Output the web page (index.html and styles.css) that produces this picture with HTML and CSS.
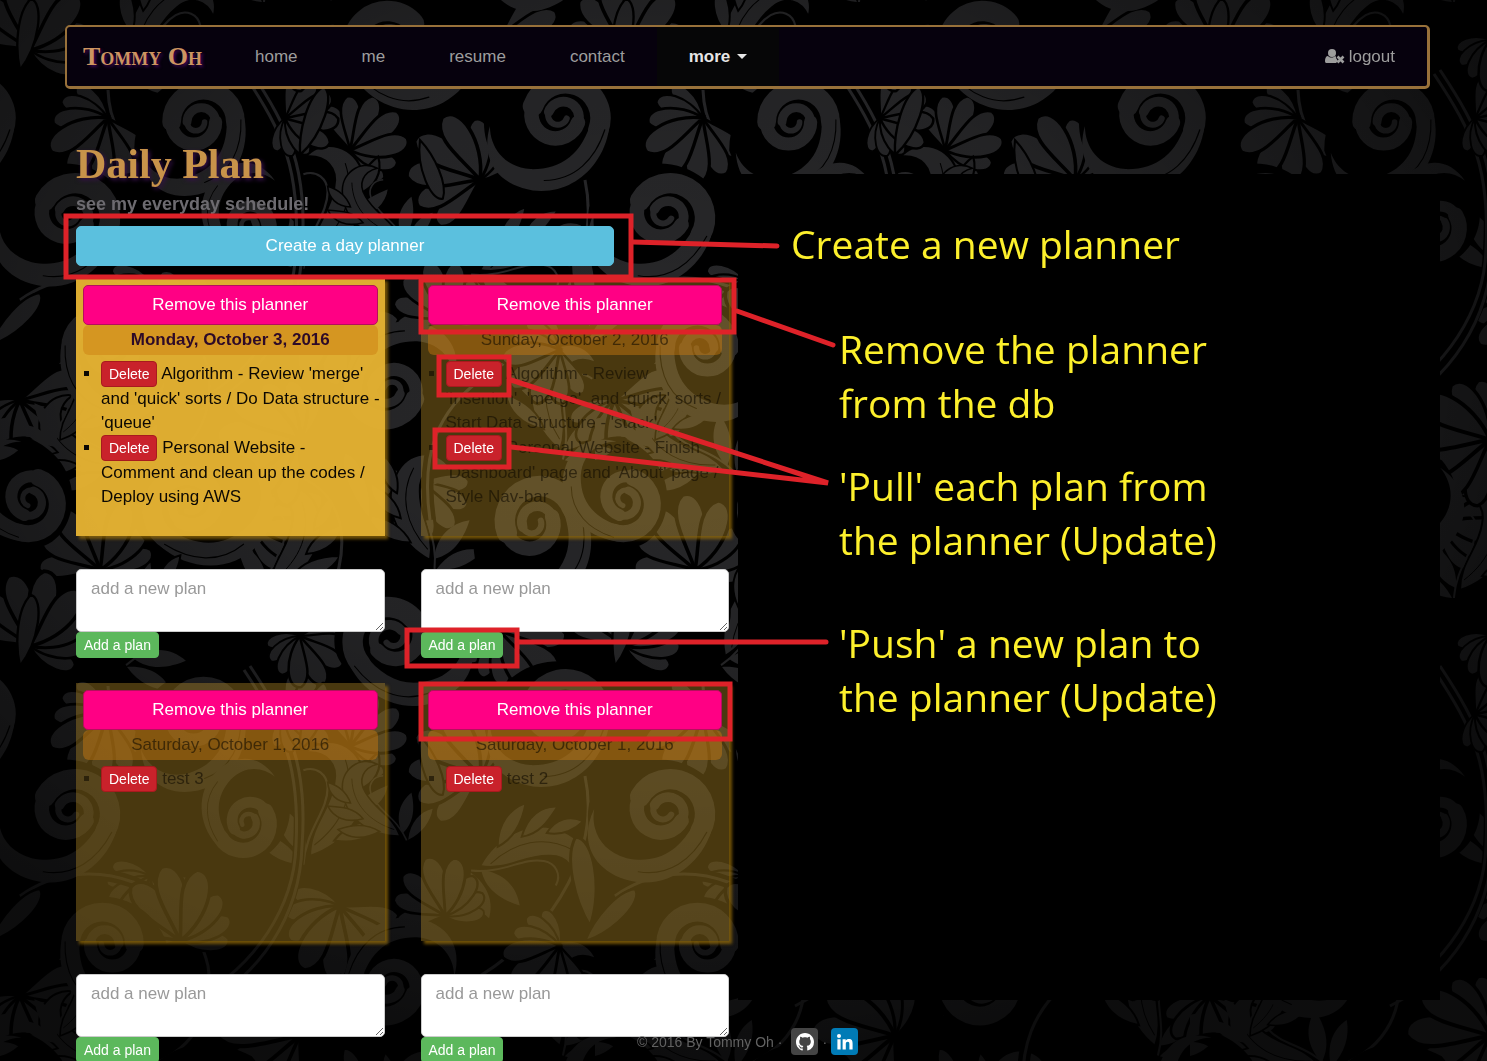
FILE: index.html
```html
<!DOCTYPE html>
<html lang="en">
<head>
<meta charset="utf-8">
<meta name="viewport" content="width=device-width, initial-scale=1">
<title>Daily Plan - Tommy Oh</title>
<link rel="stylesheet" href="styles.css">
</head>
<body>
<svg class="backdrop" aria-hidden="true">
  <defs>
    <g id="scroll" fill="none" stroke="#28282a" stroke-linecap="round">
      <path fill="#000" stroke="none" d="M30-24C32 24 20 46-8 54C-34 60-50 48-58 26C-56-60 50-60 46-4Z"/>
      <path fill="#28282a" stroke="none" d="M26-6C28 24 16 42-8 50C-30 56-46 44-52 28C-50 56-30 72 0 66C34 58 48 24 42-4Z"/>
      <path stroke-width="5" d="M6 0A8 8 0 0 1-10 0"/>
      <path stroke-width="8" d="M-10 0A13 13 0 0 1 16 0"/>
      <path stroke-width="12" d="M16 0A20 20 0 0 1-24 0"/>
      <path stroke-width="17" d="M-24 0A29 29 0 0 1 34 0"/>
      <path stroke="#000" stroke-width="1" d="M39-2C40 24 30 46 6 55"/>
    </g>
    <path id="petal" fill="#28282a" stroke="#000" stroke-width="3" d="M0 0C-6-20-24-46-10-60C8-66 16-28 0 0Z"/>
    <g id="drop">
      <path fill="#28282a" stroke="#000" stroke-width="3" d="M0 0C-12-28-16-72-2-90C16-88 18-34 0 0Z"/>
    </g>
    <g id="fan">
      <use href="#petal" transform="rotate(-100)"/>
      <use href="#petal" transform="rotate(82) scale(.8)"/>
      <use href="#petal" transform="rotate(-74) scale(1.1)"/>
      <use href="#petal" transform="rotate(58) scale(.9)"/>
      <use href="#petal" transform="rotate(-48) scale(1.200)"/>
      <use href="#petal" transform="rotate(34)"/>
      <use href="#petal" transform="rotate(-20) scale(1.250)"/>
      <use href="#petal" transform="rotate(8) scale(1.200)"/>
    </g>
    <g id="plume">
      <path fill="#28282a" stroke="#000" stroke-width="2" d="M0 0C-30-10-58-40-48-78C-42-104-12-112 4-94C-14-96-26-84-22-66C-18-40 0-28 0 0Z"/>
      <path fill="#28282a" stroke="#000" stroke-width="2" d="M-44-60C-60-66-66-80-62-94C-54-88-44-78-44-60ZM-36-36C-58-38-70-50-72-66C-58-60-42-54-36-36ZM-22-14C-46-10-62-20-70-34C-52-34-34-30-22-14Z"/>
      <path fill="none" stroke="#28282a" stroke-width="2" d="M6 8C4-24-16-40-16-62C-16-74-6-82 6-78"/>
      <path fill="#28282a" d="M4-2C2-24 14-40 32-46C30-30 24-10 4-2ZM8 8C18-12 34-20 50-18C42-4 28 6 8 8Z"/>
      <path fill="none" stroke="#000" d="M-4-10C-30-30-42-58-32-88"/>
    </g>
    <g id="tile">
      <use href="#fan" transform="translate(30 50) rotate(40)"/>
      <use href="#fan" transform="translate(350 150) rotate(80) scale(.8)"/>
      <use href="#fan" transform="translate(20 400) rotate(170)"/>
      <use href="#fan" transform="translate(250 520) rotate(100)"/>
      <use href="#fan" transform="translate(420 480) rotate(200) scale(.8)"/>
      <use href="#fan" transform="translate(340 310) rotate(-150)"/>
      <use href="#fan" transform="translate(150 280) rotate(-150) scale(.8)"/>
      <use href="#plume" transform="translate(130 60) rotate(60)"/>
      <use href="#plume" transform="translate(480 270) rotate(100)"/>
      <use href="#plume" transform="translate(130 470) rotate(-40)"/>
      <use href="#plume" transform="translate(310 260) scale(-1.1 1.1)"/>
      <use href="#plume" transform="translate(400 240) rotate(-20) scale(.8)"/>
      <use href="#plume" transform="translate(560 450) rotate(20)"/>
      <use href="#plume" transform="translate(60 440) scale(-.8 .8)"/>
      <use href="#plume" transform="translate(430 560) rotate(10)"/>
      <use href="#plume" transform="translate(270 590) scale(-1 1)"/>
      <g fill="none" stroke="#000" stroke-width="12">
        <path d="M247 72C287 132 304 170 299 250C297 315 258 375 198 406"/>
        <path d="M585 180C600 250 560 330 480 380C440 410 420 450 430 520"/>
        <path d="M20 300C90 250 190 290 208 370C214 410 200 450 150 470"/>
      </g>
      <g fill="none" stroke="#28282a" stroke-width="3">
        <path d="M250 70C290 130 308 170 302 250C300 320 260 380 200 410"/>
        <path d="M244 74C284 134 300 170 296 250C294 310 256 370 196 402"/>
        <path d="M108 90C110 150 160 190 260 186"/>
        <path d="M585 180C600 250 560 330 480 380C440 410 420 450 430 520"/>
        <path d="M20 300C90 250 190 290 208 370C214 410 200 450 150 470"/>
        <path d="M350 420C360 360 400 320 470 300"/>
        <path d="M330 596C360 520 330 470 260 470"/>
      </g>
      <use href="#fan" transform="translate(108 118) rotate(-120) scale(.9)"/>
      <use href="#fan" transform="translate(285 118) rotate(120) scale(.7)"/>
      <use href="#fan" transform="translate(480 180) rotate(-30)"/>
      <use href="#fan" transform="translate(180 345) rotate(15)"/>
      <use href="#fan" transform="translate(300 440) rotate(-60) scale(1.1)"/>
      <use href="#fan" transform="translate(445 320) rotate(10) scale(.8)"/>
      <use href="#fan" transform="translate(560 350) rotate(-100) scale(.8)"/>
      <use href="#fan" transform="translate(100 570) rotate(20)"/>
      <use href="#fan" transform="translate(500 35) rotate(150) scale(.9)"/>
      <use href="#fan" transform="translate(300 40) rotate(180) scale(.7)"/>
      <use href="#drop" transform="translate(300 155) rotate(20) scale(.8)"/>
      <use href="#drop" transform="translate(590 330) rotate(-8)"/>
      <use href="#drop" transform="translate(585 345) rotate(45) scale(.8)"/>
      <use href="#drop" transform="translate(370 520) rotate(-20) scale(.8)"/>
      <use href="#drop" transform="translate(20 70) rotate(10) scale(.8)"/>
      <use href="#drop" transform="translate(420 140) rotate(160) scale(.7)"/>
      <use href="#scroll" transform="translate(198 122) scale(1.100)"/>
      <use href="#scroll" transform="translate(560 116) scale(1.200) rotate(20)"/>
      <use href="#scroll" transform="translate(70 215) rotate(30) scale(1.200)"/>
      <use href="#scroll" transform="translate(247 226) rotate(150) scale(.9)"/>
      <use href="#scroll" transform="translate(108 348) scale(-1.100 1.100)"/>
      <use href="#scroll" transform="translate(534 523) rotate(-20) scale(1.200)"/>
      <use href="#scroll" transform="translate(392 42) scale(-1.200 1.200) rotate(40)"/>
      <use href="#scroll" transform="translate(190 505) scale(-1.200 1.200) rotate(60)"/>
      <use href="#scroll" transform="translate(390 390) rotate(200) scale(1.100)"/>
      <use href="#scroll" transform="translate(30 500) rotate(110)"/>
    </g>
    <pattern id="damask" width="595" height="596" patternUnits="userSpaceOnUse">
      <rect width="595" height="596" fill="#000"/>
      <use href="#tile"/>
      <use href="#tile" x="-595"/>
      <use href="#tile" x="595"/>
      <use href="#tile" y="-596"/>
      <use href="#tile" y="596"/>
    </pattern>
    <radialGradient id="shade" cx=".44" cy=".34" r=".66">
      <stop offset="0" stop-color="#000" stop-opacity="0"/>
      <stop offset=".45" stop-color="#000" stop-opacity=".12"/>
      <stop offset="1" stop-color="#000" stop-opacity=".68"/>
    </radialGradient>
  </defs>
  <rect width="100%" height="100%" fill="url(#damask)"/>
  <rect width="100%" height="100%" fill="url(#shade)"/>
</svg>

<div class="page">
  <header class="navbar">
    <a class="brand" href="#">Tommy Oh</a>
    <nav class="nav">
      <a href="#">home</a>
      <a href="#">me</a>
      <a href="#">resume</a>
      <a href="#">contact</a>
      <a class="nav-open" href="#">more <span class="caret"></span></a>
    </nav>
    <a class="logout" href="#">
      <svg width="20" height="15" viewBox="0 0 20 15" aria-hidden="true">
        <circle cx="7" cy="4" r="4" fill="currentColor"/>
        <path fill="currentColor" d="M3 7C1 7 0 9 0 12C0 14 1 14 2 14H11L13 12L11 9C11 8 11 7 10 7C8 9 5 9 3 7Z"/>
        <path d="M12.500 7.500L18.500 13.500M18.500 7.500L12.500 13.500" stroke="currentColor" stroke-width="2.600"/>
      </svg>
      logout</a>
  </header>

  <main class="layout">
    <section class="plans">
      <h1>Daily Plan</h1>
      <p class="lead">see my everyday schedule!</p>
      <button class="btn btn-create" type="button">Create a day planner</button>

      <div class="planners">
        <article class="planner">
          <div class="card card-today">
            <button class="btn btn-remove" type="button">Remove this planner</button>
            <h2>Monday, October 3, 2016</h2>
            <ul>
              <li><button class="btn-small btn-delete" type="button">Delete</button> Algorithm - Review 'merge'<br>and 'quick' sorts / Do Data structure -<br>'queue'</li>
              <li><button class="btn-small btn-delete" type="button">Delete</button> Personal Website -<br>Comment and clean up the codes / Deploy using AWS</li>
            </ul>
          </div>
          <textarea aria-label="New plan for October 3" placeholder="add a new plan"></textarea>
          <button class="btn-small btn-add" type="button">Add a plan</button>
        </article>

        <article class="planner">
          <div class="card">
            <button class="btn btn-remove" type="button">Remove this planner</button>
            <h2>Sunday, October 2, 2016</h2>
            <ul>
              <li><button class="btn-small btn-delete" type="button">Delete</button> Algorithm - Review<br>'Insertion', 'merge', and 'quick' sorts / Start Data Structure - 'stack'</li>
              <li><button class="btn-small btn-delete" type="button">Delete</button> Personal Website - Finish<br>'Dashboard' page and 'About' page / Style Nav-bar</li>
            </ul>
          </div>
          <textarea aria-label="New plan for October 2" placeholder="add a new plan"></textarea>
          <button class="btn-small btn-add" type="button">Add a plan</button>
        </article>

        <article class="planner">
          <div class="card">
            <button class="btn btn-remove" type="button">Remove this planner</button>
            <h2>Saturday, October 1, 2016</h2>
            <ul>
              <li><button class="btn-small btn-delete" type="button">Delete</button> test 3</li>
            </ul>
          </div>
          <textarea aria-label="New plan for October 1, third" placeholder="add a new plan"></textarea>
          <button class="btn-small btn-add" type="button">Add a plan</button>
        </article>

        <article class="planner">
          <div class="card">
            <button class="btn btn-remove" type="button">Remove this planner</button>
            <h2>Saturday, October 1, 2016</h2>
            <ul>
              <li><button class="btn-small btn-delete" type="button">Delete</button> test 2</li>
            </ul>
          </div>
          <textarea aria-label="New plan for October 1, second" placeholder="add a new plan"></textarea>
          <button class="btn-small btn-add" type="button">Add a plan</button>
        </article>
      </div>
    </section>

    <aside class="notes">
      <p class="note-create">Create a new planner</p>
      <p class="note-remove">Remove the planner<br>from the db</p>
      <p class="note-pull">'Pull' each plan from<br>the planner (Update)</p>
      <p class="note-push">'Push' a new plan to<br>the planner (Update)</p>
    </aside>
  </main>

  <svg class="callouts" width="860" height="760" viewBox="0 0 860 760" fill="none" stroke="#de2229" stroke-width="5" aria-hidden="true">
    <rect x="66" y="216" width="565" height="61"/>
    <rect x="421" y="280" width="313" height="52"/>
    <rect x="439" y="357" width="70" height="38"/>
    <rect x="435" y="430" width="74" height="37"/>
    <rect x="407" y="630" width="110" height="36"/>
    <rect x="421" y="684" width="309" height="55"/>
    <path stroke-linecap="round" d="M633 242L777 246M737 311L833 345M511 380L828 483L511 447M519 642L826 642"/>
  </svg>
</div>

<footer class="footer">
  <span>© 2016 By Tommy Oh ·</span>
  <a class="social github" href="#" aria-label="GitHub">
    <svg width="18" height="18" viewBox="0 0 16 16" aria-hidden="true"><path fill="#fff" d="M8 0C3.580 0 0 3.580 0 8c0 3.540 2.290 6.530 5.470 7.590.400.070.550-.170.550-.380 0-.190-.010-.820-.010-1.490-2.010.370-2.530-.490-2.690-.940-.090-.230-.480-.940-.820-1.130-.280-.150-.680-.520-.010-.530.630-.010 1.080.580 1.230.820.720 1.210 1.870.870 2.330.660.070-.520.280-.870.510-1.070-1.780-.200-3.640-.890-3.640-3.950 0-.870.310-1.590.820-2.150-.080-.200-.360-1.020.080-2.120 0 0 .670-.210 2.200.820.640-.180 1.320-.270 2-.270s1.360.090 2 .270c1.530-1.040 2.200-.820 2.200-.820.440 1.100.160 1.920.080 2.120.510.560.820 1.270.820 2.150 0 3.070-1.870 3.750-3.650 3.950.290.250.540.730.540 1.480 0 1.070-.010 1.930-.010 2.200 0 .210.150.460.550.380A8.010 8.010 0 0 0 16 8c0-4.420-3.580-8-8-8z"/></svg>
  </a>
  <span>·</span>
  <a class="social linkedin" href="#" aria-label="LinkedIn">
    <svg width="16" height="16" viewBox="0 0 16 16" aria-hidden="true"><g fill="#fff"><circle cx="2" cy="2" r="2"/><path d="M0.400 5.300H3.600V15.500H0.400ZM5.600 5.300H8.700V6.700C9.300 5.700 10.400 5 11.900 5C15 5 15.600 7 15.600 9.800V15.500H12.400V10.500C12.400 9.200 12.300 7.800 10.700 7.800C9.100 7.800 8.800 9 8.800 10.400V15.500H5.600Z"/></g></svg>
  </a>
</footer>
</body>
</html>
```

FILE: styles.css
```css
* {
  box-sizing: border-box;
}

body {
  margin: 0;
  background: #000;
  color: #000;
  font: 17px/24px "Liberation Sans", Arial, sans-serif;
}

h1, h2, p, ul {
  margin: 0;
}

a {
  color: inherit;
  text-decoration: none;
}

.backdrop {
  position: fixed;
  inset: 0;
  z-index: -1;
  width: 100%;
  height: 100%;
}

.page {
  position: relative;
  height: 100vh;
  overflow: hidden;
  padding-top: 25px;
}

/* Navigation */

.navbar {
  display: flex;
  align-items: stretch;
  height: 64px;
  margin: 0 57px 0 65px;
  border: 2px solid #98713a;
  border-right-width: 3px;
  border-bottom-width: 3px;
  border-radius: 5px;
  background: #06010d;
  color: #9d9d9d;
}

.navbar a {
  display: flex;
  align-items: center;
  padding: 0 32px;
}

.navbar .brand {
  padding: 0 21px 0 16px;
  color: #cd9560;
  font: bold 26px/32px "Liberation Serif", serif;
  font-variant: small-caps;
  text-shadow: 2px 2px 3px #3c0752;
}

.nav {
  display: flex;
}

.navbar .nav-open {
  gap: 7px;
  background: #060607;
  color: #e6e6e6;
  font-weight: bold;
}

.caret {
  border: 5px solid transparent;
  border-top-color: currentColor;
  border-bottom: 0;
}

.navbar .logout {
  gap: 4px;
  margin-left: auto;
}

/* Page columns */

.layout {
  display: grid;
  grid-template-columns: 738px 1fr;
}

.plans {
  padding: 51px 9px 0 76px;
}

h1 {
  color: #c8934a;
  font: bold 42px/48px "Liberation Serif", serif;
  text-shadow: 2px 2px 4px #36104a;
}

.lead {
  margin-top: 4px;
  color: #6d6b70;
  font-size: 18px;
  font-weight: bold;
}

.btn {
  display: block;
  width: 100%;
  height: 40px;
  padding: 0;
  border: 1px solid;
  border-radius: 5px;
  color: #fff;
  font: inherit;
}

.btn-create {
  max-width: 538px;
  margin-top: 10px;
  border-color: #5bc0de;
  background: #5bc0de;
}

.btn-remove {
  border-color: #b50f5c;
  background: #ff0084;
}

.btn-small {
  height: 26px;
  padding: 0 7px;
  border: 1px solid;
  border-radius: 4px;
  color: #fff;
  font: 14px/22px "Liberation Sans", Arial, sans-serif;
}

.btn-delete {
  border-color: #a81a1e;
  background: #c9222b;
}

.btn-add {
  display: block;
  border-color: #5cb85c;
  background: #5cb85c;
}

/* Planner cards */

.planners {
  display: grid;
  grid-template-columns: 1fr 1fr;
  gap: 25px 36px;
  margin-top: 12px;
}

.card {
  height: 258px;
  padding: 7px;
  background: rgba(213, 165, 44, .34);
  box-shadow: 3px 3px 3px rgba(160, 116, 10, .7);
  color: rgba(16, 12, 0, .6);
}

.card-today {
  background: rgba(228, 178, 50, .97);
  color: #0c0803;
}

.card h2 {
  height: 30px;
  border-radius: 6px;
  background: rgba(205, 125, 15, .45);
  font-size: 17px;
  font-weight: normal;
  line-height: 30px;
  text-align: center;
}

.card-today h2 {
  color: #2d0a28;
  font-weight: bold;
}

.card ul {
  margin: 6px -7px 0 0;
  padding-left: 18px;
  list-style: square;
}

.planner textarea {
  display: block;
  width: 100%;
  height: 63px;
  margin-top: 33px;
  padding: 7px 14px;
  border: 1px solid #ccc;
  border-radius: 5px;
  background: #fff;
  font: inherit;
}

.planner textarea::placeholder {
  color: #999;
}

/* Annotations */

.notes {
  align-self: start;
  min-height: 826px;
  margin: 85px 47px 0 0;
  padding: 43px 40px 0 53px;
  background: #000;
  color: #fdf02c;
  font: 39px/54px "Open Sans", sans-serif;
}

.note-remove,
.note-pull,
.note-push {
  padding-left: 48px;
}

.note-remove {
  margin-top: 51px;
}

.note-pull {
  margin-top: 29px;
}

.note-push {
  margin-top: 49px;
}

.callouts {
  position: absolute;
  top: 0;
  left: 0;
  pointer-events: none;
}

/* Footer */

.footer {
  position: fixed;
  right: 0;
  bottom: 6px;
  left: 0;
  display: flex;
  align-items: center;
  justify-content: center;
  gap: 4px;
  padding-left: 8px;
  color: #626262;
  font-size: 14px;
}

.social {
  display: flex;
  align-items: center;
  justify-content: center;
  width: 27px;
  height: 27px;
  border-radius: 4px;
}

.github {
  margin-left: 5px;
  background: #444;
}

.linkedin {
  background: #007bb6;
}
```
